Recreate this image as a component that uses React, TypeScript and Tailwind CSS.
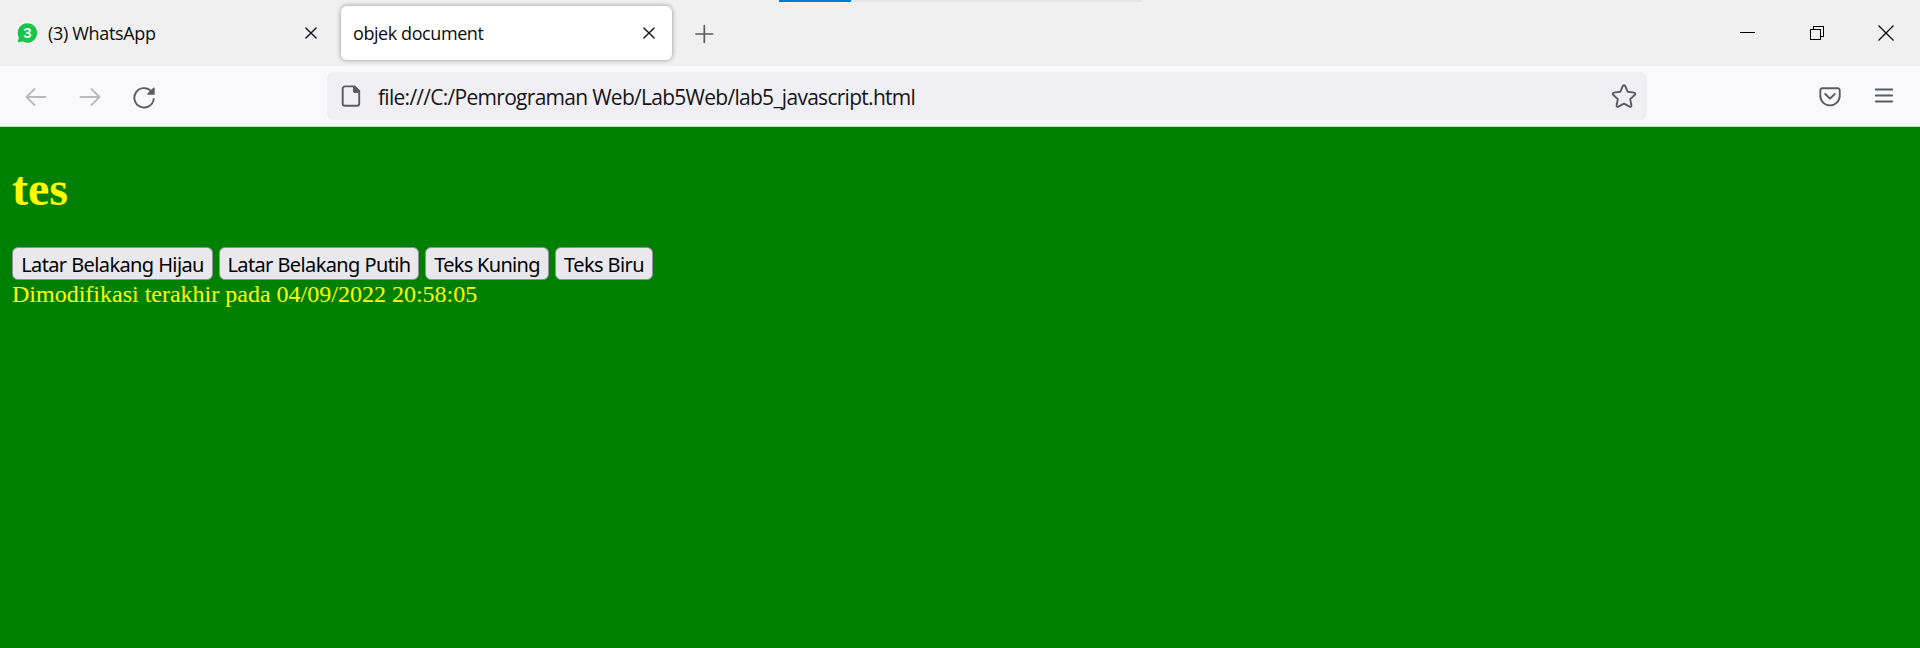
import type { ReactNode } from 'react';

const uiFont = "font-['Open_Sans','Noto_Sans',sans-serif]";

function CloseIcon() {
  return (
    <svg width="12" height="12" viewBox="0 0 12 12" fill="none" stroke="#15141a" strokeWidth="1.4" strokeLinecap="round">
      <path d="M.9.9l10.2 10.2M11.1.9L.9 11.1" />
    </svg>
  );
}

function WhatsAppIcon() {
  return (
    <svg width="24" height="24" viewBox="0 0 24 24" className="shrink-0">
      <path d="M12 .8a11 11 0 1 1-4.900 20.900L.9 23.400l1.600-6.400A11 11 0 0 1 12 .8z" fill="#fafafa" />
      <path d="M12.200 2.200a9.800 9.800 0 1 1-4.500 18.400l-5.200.9 1.300-4.800A9.800 9.800 0 0 1 12.200 2.200z" fill="#1bc34b" />
      <text x="12.400" y="17.200" textAnchor="middle" fontSize="15" fontWeight="700" fontFamily="Liberation Sans, sans-serif" fill="#e4fbe9">3</text>
    </svg>
  );
}

function TitleBar() {
  return (
    <div className="relative flex h-[66px] bg-[#f0f0f0] text-[#0c0c0d]">
      <div className="absolute left-[779px] top-0 flex h-[2px] w-[363px] bg-[#e5e5e5]">
        <div className="w-[72px] bg-[#0078d7]" />
      </div>
      <div className="flex h-full w-[341px] items-center pl-[15px] pr-6">
        <WhatsAppIcon />
        <span className="ml-[9px] grow whitespace-nowrap pt-px text-[18px] tracking-[-0.33px]">(3) WhatsApp</span>
        <CloseIcon />
      </div>
      <div className="mt-[6px] flex h-[54px] w-[331px] items-center rounded-[6px] bg-white pl-3 pr-[17px] shadow-[0_0_5px_rgba(0,0,0,0.4)]">
        <span className="grow whitespace-nowrap pt-px text-[18px] tracking-[-0.42px]">objek document</span>
        <CloseIcon />
      </div>
      <svg className="ml-[22px] mt-[24px]" width="20" height="20" viewBox="0 0 20 20" stroke="#5b5b66" strokeWidth="1.7" strokeLinecap="round">
        <path d="M10.300 1.700v16.600M2 10h16.600" />
      </svg>
      <div className="ml-auto flex gap-[53px] pr-[25px] pt-[25px]">
        <svg width="16" height="16" viewBox="0 0 16 16"><path d="M1 7.5h15" stroke="#000" /></svg>
        <svg width="16" height="16" viewBox="0 0 16 16" fill="none" stroke="#000" shapeRendering="crispEdges">
          <path d="M2.5 4.5h10v10h-10zM5.5 4V1.5h10v10H13" />
        </svg>
        <svg width="18" height="18" viewBox="0 0 18 18" stroke="#000" strokeWidth="1.2"><path d="M1.500.5l15 15M16.500.5l-15 15" /></svg>
      </div>
    </div>
  );
}

function Toolbar() {
  return (
    <div className="flex h-[61px] items-start border-b border-[#b9e3bb] bg-[#f9f9fb] pt-[6px]">
      <div className="flex w-[327px] pl-[24px] pt-[13px]">
        <svg width="24" height="24" viewBox="0 0 24 24" fill="none" stroke="#b9b9c0" strokeWidth="1.8" strokeLinecap="round" strokeLinejoin="round">
          <path d="M21.500 12H2.500M10.500 4l-8 8 8 8" />
        </svg>
        <svg className="ml-[30px]" width="24" height="24" viewBox="0 0 24 24" fill="none" stroke="#b9b9c0" strokeWidth="1.8" strokeLinecap="round" strokeLinejoin="round">
          <path d="M2.500 12h19M13.500 4l8 8-8 8" />
        </svg>
        <svg className="ml-[30px]" width="24" height="24" viewBox="0 0 24 24" fill="none">
          <path d="M19.200 6.200A9.700 9.700 0 1 0 21.700 14" stroke="#5b5b66" strokeWidth="1.900" strokeLinecap="round" />
          <path d="M22.700 3.400v6.400h-6.800a.7.7 0 0 1-.5-1.200l5.900-5.800c.6-.5 1.400-.1 1.400.6z" fill="#5b5b66" />
        </svg>
      </div>
      <div className="flex h-12 w-[1320px] items-center rounded-[6px] bg-[#f0f0f4] pl-[13px] pr-[10px]">
        <svg width="22" height="24" viewBox="0 0 22 24" className="shrink-0">
          <path d="M5 2.400h9.500L19.200 7v12.400a2.300 2.300 0 0 1-2.300 2.300H5a2.300 2.300 0 0 1-2.300-2.300V4.700A2.300 2.300 0 0 1 5 2.400z" fill="none" stroke="#5b5b66" strokeWidth="1.900" />
          <path d="M13 2h2l4.800 4.800V9h-5a1.800 1.800 0 0 1-1.800-1.800z" fill="#5b5b66" />
        </svg>
        <span className="ml-4 grow whitespace-nowrap pt-[3px] text-[21px] tracking-[-0.72px] text-[#15141a]">
          file:///C:/Pemrograman Web/Lab5Web/lab5_javascript.html
        </span>
        <svg width="26" height="26" viewBox="0 0 26 26" fill="none" stroke="#5b5b66" strokeWidth="1.900" strokeLinejoin="round">
          <path d="M11.900 2.900a1.200 1.200 0 0 1 2.200 0l2.700 5.900 6.400.8a1.200 1.200 0 0 1 .7 2.100l-4.700 4.400 1.200 6.300a1.200 1.200 0 0 1-1.800 1.300L13 20.600l-5.600 3.100a1.200 1.200 0 0 1-1.800-1.300l1.200-6.300-4.700-4.400a1.200 1.200 0 0 1 .7-2.100l6.400-.8z" />
        </svg>
      </div>
      <svg className="ml-[171px] mt-[13px]" width="24" height="24" viewBox="0 0 24 24" fill="none" stroke="#5b5b66" strokeWidth="1.900" strokeLinecap="round" strokeLinejoin="round">
        <path d="M4.300 3.200h15.400a2 2 0 0 1 2 2v5.500a9.700 9.700 0 0 1-19.400 0V5.200a2 2 0 0 1 2-2zM7.200 9l4.800 4.600L16.800 9" />
      </svg>
      <svg className="ml-[32px] mt-[13px]" width="20" height="24" viewBox="0 0 20 24" stroke="#5b5b66" strokeWidth="1.900" strokeLinecap="round">
        <path d="M1.800 4.500h16.400M1.800 10.500h16.400M1.800 16.500h16.400" />
      </svg>
    </div>
  );
}

function PageButton({ size, children }: { size: string; children: ReactNode }) {
  return (
    <button
      className={`${size} flex h-[33px] items-center justify-center whitespace-nowrap rounded-[6px] border border-[#8f8f9d] bg-[#e9e9ed] pt-[3px] text-[20px] text-black`}
    >
      {children}
    </button>
  );
}

export default function App() {
  return (
    <div className={`${uiFont} flex h-[648px] w-[1920px] flex-col overflow-hidden`}>
      <TitleBar />
      <Toolbar />
      <main className="grow bg-[#008000] px-3 pt-[34px] font-['Liberation_Serif',serif] text-[#ffff00]">
        <h1 className="text-[48px] font-bold leading-[55px]">tes</h1>
        <div className="mt-[31px] flex gap-[6px] font-['Noto_Sans',sans-serif]">
          <PageButton size="w-[201px] tracking-[-0.6px]">Latar Belakang Hijau</PageButton>
          <PageButton size="w-[200px] tracking-[-0.6px]">Latar Belakang Putih</PageButton>
          <PageButton size="w-[124px] tracking-[-0.7px]">Teks Kuning</PageButton>
          <PageButton size="w-[98px] tracking-[-0.6px]">Teks Biru</PageButton>
        </div>
        <p className="pt-px text-[24px] leading-[27px]">Dimodifikasi terakhir pada 04/09/2022 20:58:05</p>
      </main>
    </div>
  );
}
